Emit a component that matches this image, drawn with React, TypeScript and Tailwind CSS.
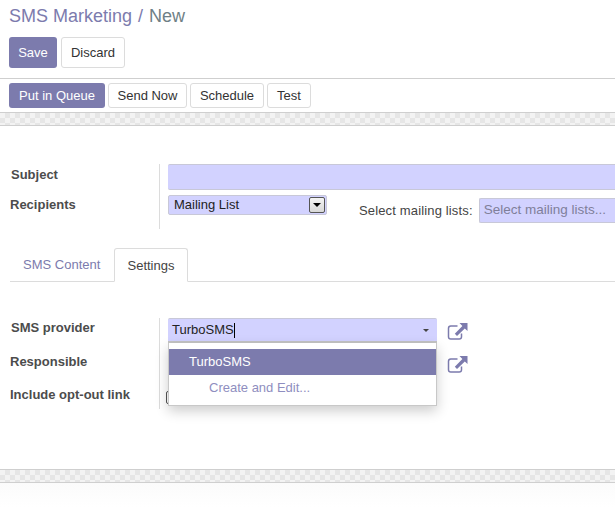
import React from 'react';

const ExternalLink: React.FC = () => (
  <svg width="21" height="18" viewBox="0 0 21 18" className="text-[#7c7bad] shrink-0">
    <path
      d="M14.5 10.5v3.2a2.3 2.3 0 0 1-2.3 2.3H3.8a2.3 2.3 0 0 1-2.3-2.3V5.3A2.3 2.3 0 0 1 3.8 3h6.7"
      fill="none"
      stroke="currentColor"
      strokeWidth="1.5"
    />
    <path d="M12.5 0H20.5V8L17.8 5.4L10 13L7.8 10.8L15.4 3Z" fill="currentColor" />
  </svg>
);

const Band: React.FC = () => (
  <div className="h-[14px] border-y border-[#cfcfcf] bg-[image:repeating-conic-gradient(#e6e6e6_0_25%,#f3f3f3_0_50%)] bg-[length:10px_10px]" />
);

const Label: React.FC<{ children: React.ReactNode; className?: string }> = ({ children, className }) => (
  <div className={`font-bold text-[#4c4c4c] text-[13px] ${className ?? ''}`}>{children}</div>
);

const App: React.FC = () => {
  return (
    <div className="w-[615px] h-[507px] overflow-hidden bg-white text-[13px] text-[#333] font-['Liberation_Sans',Arial,sans-serif]">
      <div className="pl-[9px] pt-[6px] h-[79px] border-b border-[#cfcfcf]">
        <div className="text-[18px] leading-[20px] text-[#7c7bad]">
          SMS Marketing <span className="mx-[1px]">/</span> <span className="text-[#6f7f86]">New</span>
        </div>
        <div className="flex gap-1 mt-[11px]">
          <button className="w-[48px] h-[31px] rounded-[3px] bg-[#7c7bad] text-white">Save</button>
          <button className="w-[64px] h-[31px] rounded-[3px] border border-[#dcdcdc] bg-white text-[#333]">Discard</button>
        </div>
      </div>

      <div className="flex gap-[3px] pl-[9px] pt-[4px] h-[33px]">
        <button className="w-[96px] h-[25px] rounded-[3px] bg-[#7c7bad] text-white">Put in Queue</button>
        <button className="w-[79px] h-[25px] rounded-[3px] border border-[#dcdcdc] text-[#333]">Send Now</button>
        <button className="w-[74px] h-[25px] rounded-[3px] border border-[#dcdcdc] text-[#333]">Schedule</button>
        <button className="w-[44px] h-[25px] rounded-[3px] border border-[#dcdcdc] text-[#333]">Test</button>
      </div>
      <Band />

      <div className="flex mt-[38px] h-[65px]">
        <div className="w-[160px] pl-[10px] pt-[2px] border-r border-[#dcdcdc]">
          <Label className="leading-[18px] pl-px">Subject</Label>
          <Label className="leading-[18px] mt-[12px]">Recipients</Label>
        </div>
        <div className="flex-1 pl-[8px] min-w-0">
          <div className="h-[26px] rounded-l-[2px] border-y border-[#c8c8d8] bg-[#d2d2ff]" />
          <div className="flex mt-[5px]">
            <div className="w-[159px] h-[20px] shrink-0 flex items-center justify-between pl-[5px] pr-px rounded-[2px] border border-[#c8c8d8] bg-[#d2d2ff] text-[#222]">
              <span>Mailing List</span>
              <span className="w-[16px] h-[16px] border border-[#555] rounded-[2px] bg-gradient-to-b from-[#f4f4f4] to-[#d8d8d8] flex items-center justify-center">
                <span className="border-x-[4px] border-x-transparent border-t-[4px] border-t-black" />
              </span>
            </div>
            <div className="flex items-center ml-[32px] mt-[3px] h-[25px] shrink-0">
              <span className="text-[#444] whitespace-nowrap tracking-[0.15px]">Select mailing lists:</span>
              <div className="ml-[6px] w-[137px] h-[25px] flex items-center pl-[4px] rounded-l-[2px] border border-[#c8c8d8] border-r-0 bg-[#d2d2ff] text-[13.5px] text-[#7f7f9a] whitespace-nowrap">
                Select mailing lists...
              </div>
            </div>
          </div>
        </div>
      </div>

      <div className="flex mt-[19px] ml-[10px] h-[34px] border-b border-[#dcdcdc]">
        <div className="w-[104px] pl-[13px] pt-[8px] text-[#7c7bad] leading-[18px]">SMS Content</div>
        <div className="w-[74px] h-[34px] text-center pt-[8px] leading-[18px] rounded-t-[3px] border border-[#dcdcdc] border-b-white bg-white text-[#444]">
          Settings
        </div>
      </div>

      <div className="relative flex mt-[36px] h-[91px]">
        <div className="w-[160px] pl-[10px] pt-[1px] border-r border-[#dcdcdc]">
          <Label className="leading-[18px] pl-px">SMS provider</Label>
          <Label className="leading-[18px] mt-[16px]">Responsible</Label>
          <Label className="leading-[18px] mt-[15px]">Include opt-out link</Label>
        </div>
        <div className="pl-[8px]">
          <div className="flex items-center">
            <div className="w-[269px] h-[25px] flex items-center justify-between pl-[4px] pr-[8px] rounded-t-[2px] border-t border-[#c8c8d8] border-b-2 border-b-[#c4c4c4] bg-[#d2d2ff] text-[13px] text-[#222]">
              <span className="flex items-center">
                TurboSMS<span className="w-px h-[15px] bg-black" />
              </span>
              <span className="border-x-[3px] border-x-transparent border-t-[3px] border-t-[#444]" />
            </div>
            <div className="ml-[10px] mt-[2px]">
              <ExternalLink />
            </div>
          </div>
          <div className="ml-[279px] mt-[13px]">
            <ExternalLink />
          </div>
        </div>
        <div className="absolute left-[166px] top-[73px] w-[12px] h-[13px] rounded-[2px] border border-[#555] bg-white" />

        <div className="absolute left-[168px] top-[25px] w-[269px] h-[63px] pt-[6px] bg-white border border-t-0 border-[#c8c8c8] shadow-[0_5px_12px_rgba(0,0,0,0.2)] text-[13px]">
          <div className="h-[26px] pl-[20px] flex items-center bg-[#7c7bad] text-white">TurboSMS</div>
          <div className="pl-[40px] h-[25px] flex items-center text-[#8f8ec0]">Create and Edit...</div>
        </div>
      </div>

      <div className="mt-[60px]">
        <Band />
      </div>
      <div className="h-[24px] bg-gradient-to-b from-[#fbfbfb] to-white" />
    </div>
  );
};

export default App;
